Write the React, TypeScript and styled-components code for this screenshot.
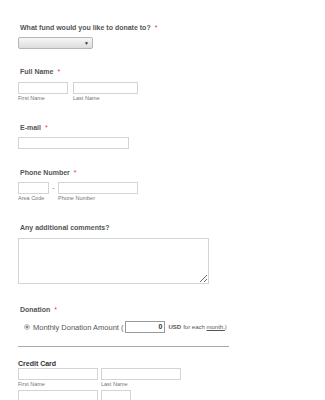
import React from "react";
import styled, { createGlobalStyle } from "styled-components";

const Global = createGlobalStyle`
  html, body { margin: 0; padding: 0; background: #fff; }
  body { font-family: "Liberation Sans", Arial, sans-serif; }
`;

const Form = styled.div`
  width: 325px;
  height: 400px;
  overflow: hidden;
  padding: 23px 0 0 18px;
  box-sizing: border-box;
  display: flex;
  flex-direction: column;
  & > * { flex-shrink: 0; }
`;

const Field = styled.div<{ $mt?: number }>`
  margin-top: ${(p) => p.$mt ?? 0}px;
  display: flex;
  flex-direction: column;
`;

const Label = styled.div<{ $mb?: number; $lh?: number; $dark?: boolean }>`
  font-size: 7px;
  font-weight: bold;
  line-height: ${(p) => p.$lh ?? 10}px;
  color: ${(p) => (p.$dark ? "#333" : "#555")};
  padding-left: ${(p) => (p.$dark ? 0 : 2)}px;
  margin-bottom: ${(p) => p.$mb ?? 4}px;
  white-space: nowrap;
`;

const Req = styled.span`
  color: #e33;
  font-weight: normal;
  margin-left: 4px;
`;

const Select = styled.div`
  width: 75px;
  height: 12px;
  box-sizing: border-box;
  border: 1px solid #b5b5b5;
  border-radius: 2px;
  background: linear-gradient(#f8f8f8, #dcdcdc);
  display: flex;
  align-items: center;
  justify-content: flex-end;
  padding-right: 3px;
  font-size: 5px;
  color: #333;
`;

const Row = styled.div<{ $gap?: number }>`
  display: flex;
  align-items: flex-start;
  gap: ${(p) => p.$gap ?? 5}px;
`;

const Col = styled.div`
  display: flex;
  flex-direction: column;
`;

const Input = styled.div<{ $w: number; $mt?: number }>`
  width: ${(p) => p.$w}px;
  height: 12px;
  margin-top: ${(p) => p.$mt ?? 0}px;
  box-sizing: border-box;
  border: 1px solid #d4d4d4;
  background: #fff;
`;

const Sub = styled.div`
  font-size: 5.5px;
  line-height: 8px;
  color: #777;
  white-space: nowrap;
`;

const Dash = styled.div`
  font-size: 7px;
  color: #777;
  line-height: 12px;
  width: 5px;
  text-align: center;
`;

const TextArea = styled.textarea`
  width: 191px;
  height: 46px;
  box-sizing: border-box;
  border: 1px solid #d4d4d4;
  margin: 0;
  padding: 0;
  display: block;
  resize: both;
`;

const RadioRow = styled.div`
  display: flex;
  align-items: center;
  height: 12px;
  padding-left: 6px;
  font-size: 7.5px;
  color: #555;
  white-space: nowrap;
`;

const Radio = styled.span`
  width: 6px;
  height: 6px;
  border-radius: 50%;
  border: 1px solid #bbb;
  box-sizing: border-box;
  background: radial-gradient(circle, #888 0 1.4px, #e8e8e8 1.6px);
  margin-right: 3px;
`;

const Amount = styled.div`
  width: 40px;
  height: 12px;
  box-sizing: border-box;
  border: 1px solid #999;
  margin: 0 3px 0 2px;
  font-size: 7px;
  line-height: 10px;
  color: #333;
  text-align: right;
  padding-right: 2px;
  font-weight: bold;
`;

const Small = styled.span<{ $bold?: boolean }>`
  font-size: 6px;
  color: #555;
  font-weight: ${(p) => (p.$bold ? "bold" : "normal")};
  margin-right: 2px;
`;

const Link = styled.span`
  text-decoration: underline;
`;

const Divider = styled.div`
  width: 211px;
  height: 1px;
  background: #aaa;
  margin-top: 13px;
`;

export default function App() {
  return (
    <>
      <Global />
      <Form>
        <Field>
          <Label>
            What fund would you like to donate to?<Req>*</Req>
          </Label>
          <Select>▼</Select>
        </Field>

        <Field $mt={18}>
          <Label $mb={5}>
            Full Name<Req>*</Req>
          </Label>
          <Row>
            <Col>
              <Input $w={50} />
              <Sub>First Name</Sub>
            </Col>
            <Col>
              <Input $w={65} />
              <Sub>Last Name</Sub>
            </Col>
          </Row>
        </Field>

        <Field $mt={21}>
          <Label>
            E-mail<Req>*</Req>
          </Label>
          <Input $w={111} />
        </Field>

        <Field $mt={19}>
          <Label>
            Phone Number<Req>*</Req>
          </Label>
          <Row $gap={2}>
            <Col>
              <Input $w={31} />
              <Sub>Area Code</Sub>
            </Col>
            <Dash>-</Dash>
            <Col>
              <Input $w={80} />
              <Sub>Phone Number</Sub>
            </Col>
          </Row>
        </Field>

        <Field $mt={21}>
          <Label $mb={5}>Any additional comments?</Label>
          <TextArea />
        </Field>

        <Field $mt={21}>
          <Label $mb={6}>
            Donation<Req>*</Req>
          </Label>
          <RadioRow>
            <Radio />
            Monthly Donation Amount (
            <Amount>0</Amount>
            <Small $bold>USD</Small>
            <Small>
              for each <Link>month.</Link>)
            </Small>
          </RadioRow>
        </Field>

        <Divider />

        <Field $mt={12}>
          <Label $lh={9} $mb={0} $dark>
            Credit Card
          </Label>
          <Row $gap={3}>
            <Col>
              <Input $w={80} />
              <Sub>First Name</Sub>
            </Col>
            <Col>
              <Input $w={80} />
              <Sub>Last Name</Sub>
            </Col>
          </Row>
          <Row $gap={3}>
            <Input $w={80} $mt={2} />
            <Input $w={30} $mt={2} />
          </Row>
        </Field>
      </Form>
    </>
  );
}
